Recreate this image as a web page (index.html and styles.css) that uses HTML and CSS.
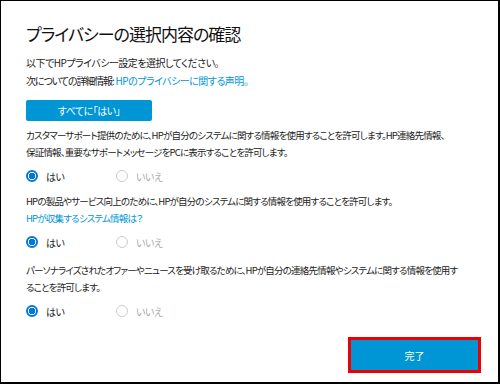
FILE: index.html
```html
<!DOCTYPE html>
<html lang="ja">

<head>
	<meta charset="UTF-8">
	<title>プライバシーの選択内容の確認</title>
	<link rel="stylesheet" href="styles.css">
</head>

<body>

	<div class="dialog">
		<h1 class="title">プライバシーの選択内容の確認</h1>
		<p class="intro">以下でHPプライバシー設定を選択してください。</p>
		<p class="intro"><span class="lead">次についての詳細情報:</span> <a href="#" class="link">HPのプライバシーに関する声明。</a></p>

		<button class="btn allYes">すべてに「はい」</button>

		<section class="question first">
			<p>カスタマーサポート提供のために、HPが自分のシステムに関する情報を使用することを許可します。HP連絡先情報、<br>保証情報、重要なサポートメッセージをPCに表示することを許可します。</p>
			<div class="choices">
				<label class="radio on"><span class="mark"></span>はい</label>
				<label class="radio off"><span class="mark"></span>いいえ</label>
			</div>
		</section>

		<section class="question second">
			<p>HPの製品やサービス向上のために、HPが自分のシステムに関する情報を使用することを許可します。<br>
				<a href="#" class="link">HPが収集するシステム情報は？</a></p>
			<div class="choices">
				<label class="radio on"><span class="mark"></span>はい</label>
				<label class="radio off"><span class="mark"></span>いいえ</label>
			</div>
		</section>

		<section class="question third">
			<p>パーソナライズされたオファーやニュースを受け取るために、HPが自分の連絡先情報やシステムに関する情報を使用することを許可します。</p>
			<div class="choices">
				<label class="radio on"><span class="mark"></span>はい</label>
				<label class="radio off"><span class="mark"></span>いいえ</label>
			</div>
		</section>

		<div class="footer">
			<button class="btn done">完了</button>
		</div>
	</div>

</body>

</html>
```

FILE: styles.css
```css
* {
	margin: 0;
	padding: 0;
	box-sizing: border-box;
}

body {
	font-family: "Noto Sans CJK JP", "Noto Sans", sans-serif;
	font-feature-settings: "palt";
	background-color: #fff;
	color: #222;
}

.dialog {
	width: 500px;
	height: 384px;
	border: 1px solid #000;
	border-right-width: 2px;
	border-bottom-width: 2px;
	padding: 21px 0 0 25px;
	display: flex;
	flex-direction: column;
	align-items: flex-start;
}

.title {
	font-size: 17px;
	font-weight: normal;
	letter-spacing: -1px;
	line-height: 24px;
	color: #111;
	margin-bottom: 8px;
}

.intro {
	font-size: 10px;
	letter-spacing: -0.5px;
	line-height: 18px;
}

.intro .lead {
	letter-spacing: -1.1px;
}

.link {
	color: #0096d6;
	text-decoration: none;
}

.btn {
	font-family: inherit;
	font-feature-settings: "palt";
	border: none;
	background-color: #0096d6;
	color: #fff;
	cursor: pointer;
}

.allYes {
	width: 126px;
	height: 21px;
	margin-top: 10px;
	border-radius: 2px;
	font-size: 10px;
	letter-spacing: -0.5px;
}

.question {
	width: 434px;
	margin-top: 6px;
}

.question.second {
	margin-top: 9px;
}

.question.third {
	margin-top: 12px;
}

.question p {
	font-size: 9.5px;
	letter-spacing: -0.8px;
	line-height: 17px;
}

.choices {
	display: flex;
	margin-top: 7px;
}

.radio {
	display: flex;
	align-items: center;
	width: 90px;
	height: 16px;
	font-size: 10px;
	letter-spacing: -0.5px;
	color: #222;
}

.radio .mark {
	width: 12px;
	height: 12px;
	border-radius: 50%;
	margin-right: 8px;
	border: 1px solid #ccc;
	background-color: #fff;
}

.radio.on .mark {
	border: 2px solid #0078d7;
	background: radial-gradient(circle, #0078d7 0 3px, #fff 3.5px);
}

.radio.off {
	color: #aaa;
}

.footer {
	align-self: stretch;
	display: flex;
	justify-content: flex-end;
	padding-right: 17px;
	margin-top: auto;
	margin-bottom: 9px;
}

.done {
	width: 133px;
	height: 36px;
	border: 3px solid #e00;
	font-size: 10px;
}
```
